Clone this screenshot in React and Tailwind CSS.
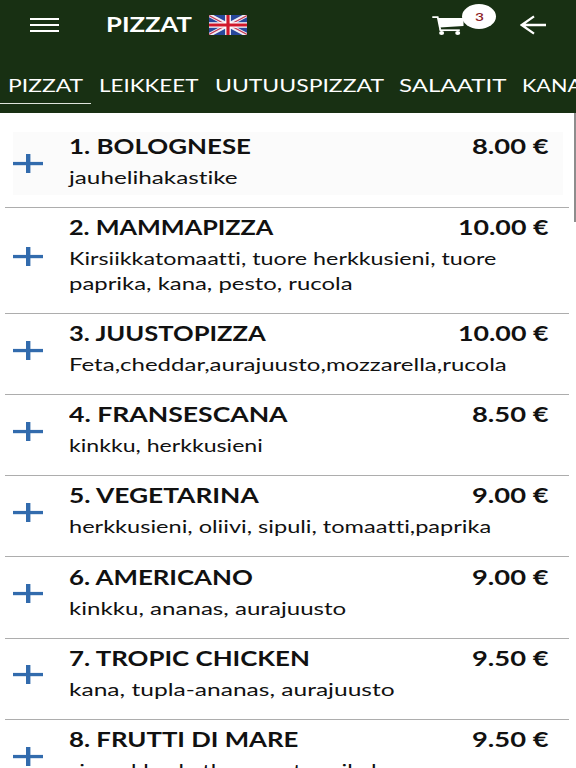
import React, { useLayoutEffect, useRef, useState } from 'react';

const items = [
  { name: '1. BOLOGNESE', w: 182, price: '8.00 €', pw: 76, desc: [['jauhelihakastike', 168]] },
  {
    name: '2. MAMMAPIZZA', w: 204, price: '10.00 €', pw: 90,
    desc: [['Kirsiikkatomaatti, tuore herkkusieni, tuore', 427], ['paprika, kana, pesto, rucola', 284]],
  },
  { name: '3. JUUSTOPIZZA', w: 197, price: '10.00 €', pw: 90, desc: [['Feta,cheddar,aurajuusto,mozzarella,rucola', 438]] },
  { name: '4. FRANSESCANA', w: 219, price: '8.50 €', pw: 76, desc: [['kinkku, herkkusieni', 194]] },
  { name: '5. VEGETARINA', w: 190, price: '9.00 €', pw: 76, desc: [['herkkusieni, oliivi, sipuli, tomaatti,paprika', 422]] },
  { name: '6. AMERICANO', w: 184, price: '9.00 €', pw: 76, desc: [['kinkku, ananas, aurajuusto', 277]] },
  { name: '7. TROPIC CHICKEN', w: 241, price: '9.50 €', pw: 76, desc: [['kana, tupla-ananas, aurajuusto', 325]] },
  { name: '8. FRUTTI DI MARE', w: 230, price: '9.50 €', pw: 76, desc: [['simpukka, katkarapu, tonnikala', 320]] },
];

const tabs = [
  ['PIZZAT', 75, true],
  ['LEIKKEET', 99.5],
  ['UUTUUSPIZZAT', 168.5],
  ['SALAATIT', 107],
  ['KANA', 60],
];

// Wide lettering: the text is stretched horizontally to fill the given width.
function Wide({ width, className = '', children }) {
  const ref = useRef(null);
  const [scale, setScale] = useState(1);
  useLayoutEffect(() => {
    const fit = () => setScale(width / ref.current.offsetWidth);
    fit();
    document.fonts?.ready.then(() => ref.current && fit());
  }, [width, children]);
  return (
    <span className={`block shrink-0 whitespace-nowrap ${className}`} style={{ width }}>
      <span ref={ref} className="inline-block origin-left align-top" style={{ transform: `scaleX(${scale})` }}>
        {children}
      </span>
    </span>
  );
}

function Flag() {
  return (
    <svg className="ml-[17px] h-5 w-[38px]" viewBox="0 0 60 32" preserveAspectRatio="none">
      <path fill="#28479c" d="M0 0h60v32H0z" />
      <path stroke="#f1eef5" strokeWidth="6.5" d="M0 0l60 32M60 0L0 32" />
      <path stroke="#c63a52" strokeWidth="2" d="M0 1l28 15M60 31L32 16M60 1L32 16M0 31l28-15" />
      <path stroke="#fff" strokeWidth="9" d="M30 0v32M0 16h60" />
      <path stroke="#d0182c" strokeWidth="5" d="M30 0v32M0 16h60" />
    </svg>
  );
}

function Cart() {
  return (
    <svg className="h-5 w-8" viewBox="0 0 32 20" fill="none" stroke="#fff">
      <path d="M0.3 2.1h5.4l2.6 12.8" strokeWidth="1.8" />
      <path d="M6 3h25.5v7.9L7.6 12.4z" fill="#fff" stroke="none" />
      <path d="M7.5 15.2h20.3" strokeWidth="1.7" />
      <ellipse cx="9.6" cy="18" rx="2.5" ry="1.9" fill="#fff" stroke="none" />
      <ellipse cx="25.7" cy="18" rx="2.5" ry="1.9" fill="#fff" stroke="none" />
    </svg>
  );
}

function Plus() {
  return (
    <svg className="h-[19px] w-[30px] shrink-0" viewBox="0 0 30 19">
      <path fill="#326bad" d="M0 7.9h30v3.3H0z" />
      <path fill="#326bad" d="M13 0h4.4v19H13z" />
    </svg>
  );
}

export default function App() {
  return (
    <div className="relative flex h-[768px] w-[576px] flex-col overflow-hidden bg-white font-['Lato','Noto_Sans',sans-serif] text-[#111] [font-variant-ligatures:none]">
      <header className="h-[113px] shrink-0 bg-[#183013] text-white">
        <div className="flex h-[50px] items-center">
          <div className="ml-[30px] flex w-[29px] flex-col gap-[3.5px]">
            <div className="h-[2.5px] bg-white" />
            <div className="h-[2.5px] bg-white" />
            <div className="h-[2.5px] bg-white" />
          </div>
          <Wide width={86} className="-mt-[2px] ml-[47px] text-[20px] font-bold leading-[26px]">PIZZAT</Wide>
          <Flag />
          <div className="relative ml-[185px]">
            <Cart />
            <span className="absolute -top-[11px] left-[30px] flex h-[25px] w-[34px] items-center justify-center rounded-[50%] bg-white text-[#8c1c24]">
              <Wide width={9} className="text-[12px] font-semibold leading-[24px]">3</Wide>
            </span>
          </div>
          <svg className="ml-[56px] h-5 w-[26px]" viewBox="0 0 26 20" fill="none" stroke="#fff" strokeWidth="2.3">
            <path d="M14 1.4L1.7 10 14 18.6M1.7 10H26" />
          </svg>
        </div>
        <nav className="mt-[19px] flex w-[600px]">
          {tabs.map(([label, w, active]) => (
            <div
              key={label}
              className={`h-[35px] shrink-0 px-2 pt-[4px] ${active ? 'border-b border-[#dfe5dd]' : ''}`}
            >
              <Wide width={w} className="text-[18px] leading-[24px]">{label}</Wide>
            </div>
          ))}
        </nav>
      </header>

      <main className="flex flex-col pt-[14px]">
        {items.map((it, i) => (
          <section key={it.name} className="ml-[5px] mr-[7px] shrink-0 border-b border-[#adadad] pb-[12.6px] pt-[5px]">
            <div className={`ml-2 mr-[6px] flex items-center ${i === 0 ? 'bg-[#fbfbfb]' : ''}`}>
              <Plus />
              <div className="ml-[26px] min-w-0 flex-1 pb-[4.8px] pt-[1.2px]">
                <div className="flex justify-between pr-[15px] text-[20.5px] font-bold leading-[26px]">
                  <Wide width={it.w}>{it.name}</Wide>
                  <Wide width={it.pw}>{it.price}</Wide>
                </div>
                <div className="pt-[6px]">
                  {it.desc.map(([text, w]) => (
                    <Wide key={text} width={w} className="text-[17.75px] leading-[24.6px]">{text}</Wide>
                  ))}
                </div>
              </div>
            </div>
          </section>
        ))}
      </main>

      <div className="absolute right-0 top-[113px] h-[109px] w-[2px] bg-[#8d8d8d]" />
    </div>
  );
}
